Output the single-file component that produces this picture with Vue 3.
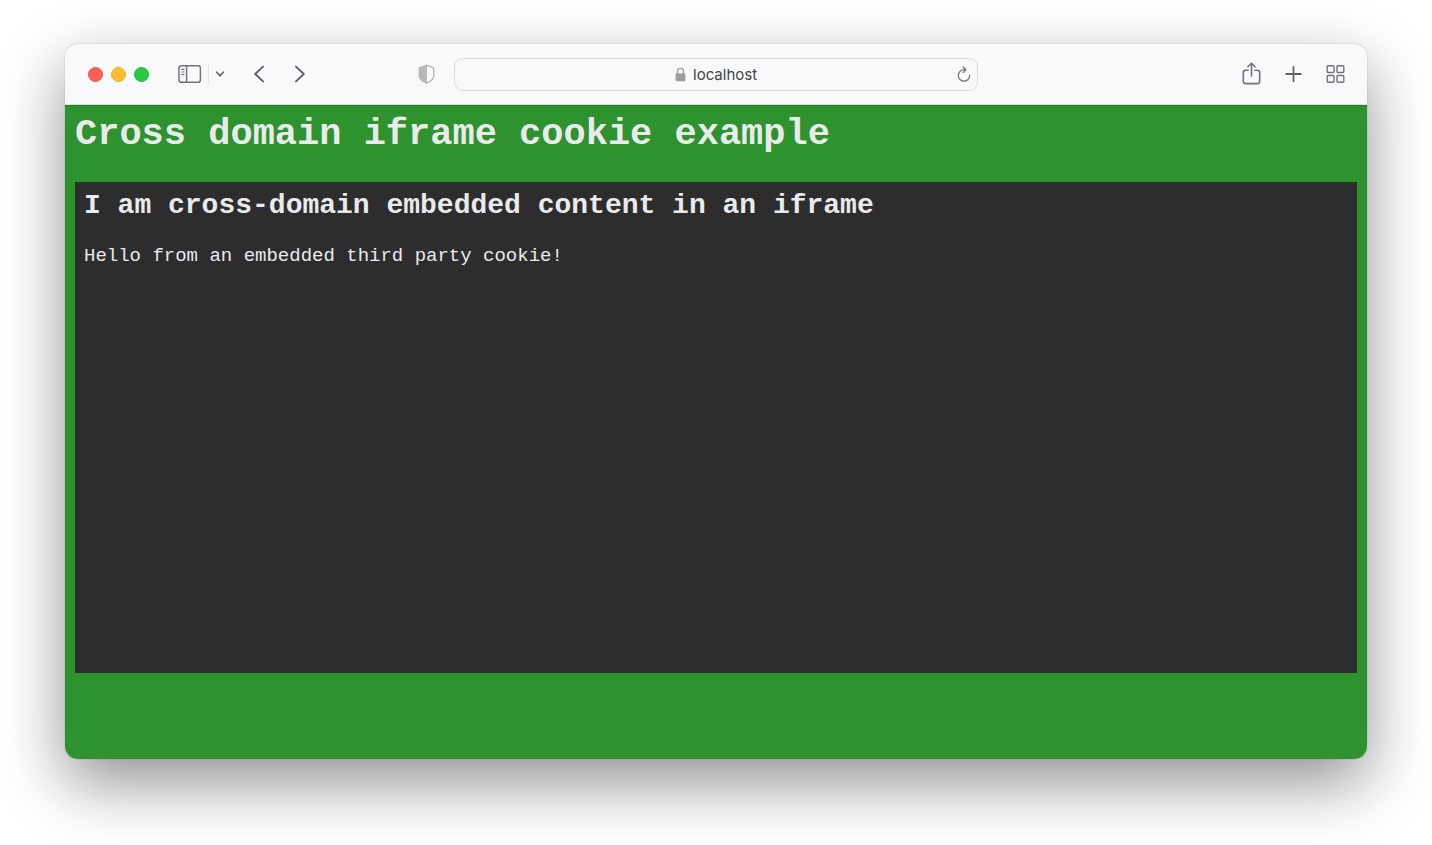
<script setup>
import { ref } from 'vue'

const address = ref('localhost')
</script>

<template>
  <div class="desktop">
    <div class="window">
      <header class="toolbar">
        <div class="side left">
          <div class="lights">
            <button class="light close" aria-label="Close"></button>
            <button class="light minimise" aria-label="Minimise"></button>
            <button class="light zoom" aria-label="Zoom"></button>
          </div>
          <div class="sidebar-group">
            <button class="tool" aria-label="Show sidebar">
              <svg width="24" height="20" viewBox="0 0 24 20" fill="none" stroke="#727376" stroke-width="1.5">
                <rect x="1" y="1.7" width="21.4" height="16.6" rx="2.4" />
                <path d="M8.6 2v16" />
                <path d="M3.4 5.3h3M3.4 8h3M3.4 10.7h3" stroke-width="1.2" />
              </svg>
            </button>
            <span class="divider"></span>
            <button class="tool" aria-label="Tab groups">
              <svg width="10" height="8" viewBox="0 0 10 8" fill="none" stroke="#747578" stroke-width="1.8" stroke-linecap="round" stroke-linejoin="round">
                <path d="M1.6 2.2L5 5.8l3.4-3.6" />
              </svg>
            </button>
          </div>
          <nav class="history">
            <button class="tool" aria-label="Back">
              <svg width="12" height="20" viewBox="0 0 12 20" fill="none" stroke="#606164" stroke-width="1.9" stroke-linecap="round" stroke-linejoin="round">
                <path d="M10 2.6L2.2 10l7.8 7.4" />
              </svg>
            </button>
            <button class="tool" aria-label="Forward">
              <svg width="12" height="20" viewBox="0 0 12 20" fill="none" stroke="#606164" stroke-width="1.9" stroke-linecap="round" stroke-linejoin="round">
                <path d="M2 2.6L9.8 10L2 17.4" />
              </svg>
            </button>
          </nav>
          <button class="tool shield" aria-label="Privacy report">
            <svg width="17" height="20" viewBox="0 0 17 20">
              <path d="M8.5 1.2L15.7 4v8.2c0 3-3.6 5.2-7.2 6.8-3.6-1.6-7.2-3.8-7.2-6.8V4z" fill="none" stroke="#b7b8ba" stroke-width="1.4" stroke-linejoin="round" />
              <path d="M9 1.2L1.3 4v8.2c0 3 3.6 5.2 7.7 6.8z" fill="#b7b8ba" />
            </svg>
          </button>
        </div>

        <div class="address">
          <label class="site">
            <svg width="11" height="15" viewBox="0 0 11 15" role="img" aria-label="Address">
              <path d="M2.5 7V4.3a3 3 0 0 1 6 0V7" fill="none" stroke="#9c9d9f" stroke-width="1.3" />
              <rect x="0.6" y="6.2" width="9.8" height="8" rx="1.2" fill="#9c9d9f" />
            </svg>
            <input v-model="address" class="url" type="text" spellcheck="false" />
          </label>
          <button class="tool reload" aria-label="Reload">
            <svg width="14" height="17" viewBox="0 0 14 17" fill="none" stroke="#77787b" stroke-width="1.3" stroke-linecap="round" stroke-linejoin="round">
              <path d="M12.7 9.4A5.7 5.7 0 1 1 7 3.7h1.5" />
              <path d="M6.2 1l2.7 2.7-2.7 2.8" />
            </svg>
          </button>
        </div>

        <div class="side right">
          <button class="tool" aria-label="Share">
            <svg width="19" height="24" viewBox="0 0 19 24" fill="none" stroke="#727376" stroke-width="1.6" stroke-linecap="round" stroke-linejoin="round">
              <path d="M6.2 8.2H3.6A2.3 2.3 0 0 0 1.3 10.500v8.800a2.300 2.300 0 0 0 2.300 2.300h11.800a2.300 2.300 0 0 0 2.300-2.300v-8.800a2.300 2.300 0 0 0-2.300-2.300h-2.600" />
              <path d="M9.5 14V1.500M5.900 4.800l3.600-3.600 3.600 3.600" />
            </svg>
          </button>
          <button class="tool" aria-label="New tab">
            <svg width="17" height="18" viewBox="0 0 17 18" fill="none" stroke="#606164" stroke-width="1.8" stroke-linecap="round">
              <path d="M8.5 1.8v14.400M1.200 9h14.600" />
            </svg>
          </button>
          <button class="tool" aria-label="Tab overview">
            <svg width="19" height="20" viewBox="0 0 19 20" fill="none" stroke="#727376" stroke-width="1.4">
              <rect x="1.2" y="1.7" width="6.8" height="6.8" rx="1" />
              <rect x="11" y="1.7" width="6.8" height="6.8" rx="1" />
              <rect x="1.2" y="11.5" width="6.8" height="6.8" rx="1" />
              <rect x="11" y="11.5" width="6.8" height="6.8" rx="1" />
            </svg>
          </button>
        </div>
      </header>

      <main class="page">
        <h1>Cross domain iframe cookie example</h1>
        <section class="embed">
          <h2>I am cross-domain embedded content in an iframe</h2>
          <p>Hello from an embedded third party cookie!</p>
        </section>
      </main>
    </div>
  </div>
</template>

<style>
body {
  margin: 0;
  background: #fff;
}
</style>

<style scoped>
.desktop {
  box-sizing: border-box;
  display: flex;
  min-height: 100vh;
  padding: 44px 65px 86px;
  overflow: hidden;
}

.window {
  flex: 1;
  display: flex;
  flex-direction: column;
  min-width: 0;
  border-radius: 13px;
  overflow: hidden;
  box-shadow: 0 0 1px rgba(0, 0, 0, 0.5), 0 24px 64px rgba(0, 0, 0, 0.43);
}

.toolbar {
  display: grid;
  grid-template-columns: 1fr minmax(200px, 524px) 1fr;
  align-items: center;
  height: 60px;
  background: #f8f9fb;
  border-bottom: 1px solid #d9dfdb;
}

.side {
  display: flex;
  align-items: center;
}

.left {
  padding: 0 19px 0 23px;
}

.right {
  justify-content: flex-end;
  gap: 24px;
  padding-right: 22px;
}

button {
  display: flex;
  align-items: center;
  justify-content: center;
  margin: 0;
  padding: 0;
  border: 0;
  background: none;
}

svg {
  display: block;
}

.lights {
  display: flex;
  gap: 8px;
}

.light {
  width: 15px;
  height: 15px;
  box-sizing: border-box;
  border-radius: 50%;
}

.close {
  background: #ff5f57;
  border: 1px solid #ee574f;
}

.minimise {
  background: #febc2e;
  border: 1px solid #eeb02c;
}

.zoom {
  background: #28c840;
  border: 1px solid #25bb3c;
}

.sidebar-group {
  display: flex;
  align-items: center;
  gap: 6px;
  margin-left: 29px;
}

.divider {
  width: 1px;
  height: 20px;
  background: #e8e9eb;
}

.history {
  display: flex;
  gap: 29px;
  margin-left: 28px;
}

.shield {
  margin-left: auto;
}

.address {
  display: flex;
  align-items: center;
  box-sizing: border-box;
  height: 33px;
  padding: 1px 6px 0;
  border: 1px solid #dcdddf;
  border-radius: 9px;
}

.site {
  flex: 1;
  display: flex;
  align-items: center;
  justify-content: center;
  gap: 7px;
  padding-left: 16px;
}

.url {
  width: 66px;
  margin: 0;
  padding: 1px 0 0;
  border: 0;
  outline: 0;
  background: none;
  color: #434446;
  font: 15px/20px Inter, "Liberation Sans", sans-serif;
}

.page {
  flex: 1;
  display: flex;
  flex-direction: column;
  padding: 7px 10px 86px;
  border-top: 1px solid #29832a;
  background: #2e922e;
  color: #e9eaec;
  font-family: "Liberation Mono", "Courier New", monospace;
}

h1,
h2,
p {
  margin: 0;
}

h1 {
  margin-bottom: 27px;
  font-size: 37px;
  line-height: 42px;
}

.embed {
  flex: 1;
  padding: 8px 9px;
  background: #2d2d2d;
}

h2 {
  margin-bottom: 23px;
  font-size: 28px;
  line-height: 32px;
}

p {
  font-size: 19px;
  line-height: 22px;
}
</style>
